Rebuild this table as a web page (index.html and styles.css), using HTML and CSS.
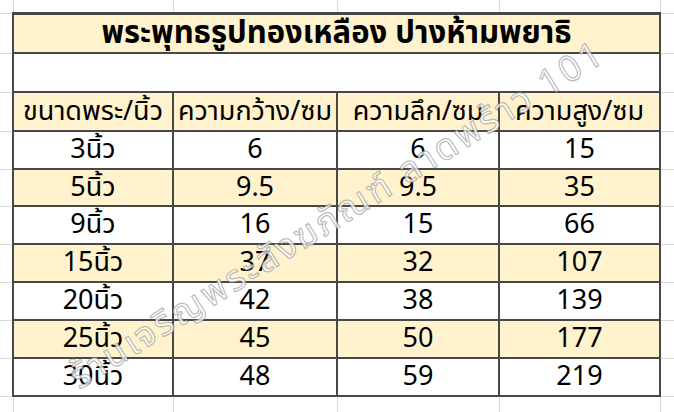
FILE: index.html
```html
<!DOCTYPE html>
<html lang="th">
<head>
<meta charset="utf-8">
<title>พระพุทธรูปทองเหลือง ปางห้ามพยาธิ</title>
<link rel="stylesheet" href="styles.css">
</head>
<body>
<div class="page">
<table class="sheet">
<colgroup><col class="c0"><col class="c1"><col class="c2"><col class="c3"><col class="c4"><col class="c5"></colgroup>
<tr class="r-top"><td></td><td></td><td></td><td></td><td></td><td></td></tr>
<tr class="r-title"><td class="m"></td><td colspan="4" class="t title"><div class="in">พระพุทธรูปทองเหลือง ปางห้ามพยาธิ</div></td><td class="m"></td></tr>
<tr class="r-blank"><td class="m"></td><td colspan="4" class="t blank"><div class="in"></div></td><td class="m"></td></tr>
<tr class="r-head"><td class="m"></td><td class="t cream"><div class="in">ขนาดพระ/นิ้ว</div></td><td class="t cream"><div class="in">ความกว้าง/ซม</div></td><td class="t cream"><div class="in">ความลึก/ซม</div></td><td class="t cream"><div class="in">ความสูง/ซม</div></td><td class="m"></td></tr>
<tr class="r-a"><td class="m"></td><td class="t"><div class="in">3นิ้ว</div></td><td class="t"><div class="in">6</div></td><td class="t"><div class="in">6</div></td><td class="t"><div class="in">15</div></td><td class="m"></td></tr>
<tr class="r-b"><td class="m"></td><td class="t cream"><div class="in">5นิ้ว</div></td><td class="t cream"><div class="in">9.5</div></td><td class="t cream"><div class="in">9.5</div></td><td class="t cream"><div class="in">35</div></td><td class="m"></td></tr>
<tr class="r-c"><td class="m"></td><td class="t"><div class="in">9นิ้ว</div></td><td class="t"><div class="in">16</div></td><td class="t"><div class="in">15</div></td><td class="t"><div class="in">66</div></td><td class="m"></td></tr>
<tr class="r-c"><td class="m"></td><td class="t cream"><div class="in">15นิ้ว</div></td><td class="t cream"><div class="in">37</div></td><td class="t cream"><div class="in">32</div></td><td class="t cream"><div class="in">107</div></td><td class="m"></td></tr>
<tr class="r-c"><td class="m"></td><td class="t"><div class="in">20นิ้ว</div></td><td class="t"><div class="in">42</div></td><td class="t"><div class="in">38</div></td><td class="t"><div class="in">139</div></td><td class="m"></td></tr>
<tr class="r-c"><td class="m"></td><td class="t cream"><div class="in">25นิ้ว</div></td><td class="t cream"><div class="in">45</div></td><td class="t cream"><div class="in">50</div></td><td class="t cream"><div class="in">177</div></td><td class="m"></td></tr>
<tr class="r-c"><td class="m"></td><td class="t"><div class="in">30นิ้ว</div></td><td class="t"><div class="in">48</div></td><td class="t"><div class="in">59</div></td><td class="t"><div class="in">219</div></td><td class="m"></td></tr>
<tr class="r-end"><td></td><td></td><td></td><td></td><td></td><td></td></tr>
</table>
<div class="watermark">ร้านเจริญพระสังฆภัณฑ์ ลาดพร้าว 101</div>
</div>
</body>
</html>
```
FILE: styles.css
```css
html, body {
  margin: 0;
  padding: 0;
  background: #ffffff;
}
.page {
  position: relative;
  width: 674px;
  height: 412px;
  overflow: hidden;
  font-family: Tahoma, "Noto Sans Thai", "Noto Sans", "DejaVu Sans", sans-serif;
  color: #000;
}
.sheet {
  border-collapse: collapse;
  table-layout: fixed;
  width: 700px;
  border: hidden;
}
.c0 { width: 13px; }
.c1 { width: 160px; }
.c2 { width: 164px; }
.c3 { width: 162px; }
.c4 { width: 161px; }
.c5 { width: 40px; }
.sheet td {
  border: 1px solid #dadada;
  padding: 0;
  text-align: center;
  vertical-align: top;
  font-size: 27px;
  line-height: 1;
  white-space: nowrap;
}
.sheet td .in {
  height: var(--h);
  line-height: var(--h);
  overflow: visible;
}
.r-top td { height: 12px; }
.r-title { --h: 37px; }
.r-blank { --h: 37px; }
.r-head { --h: 37px; }
.r-a { --h: 36px; }
.r-b { --h: 35px; }
.r-c { --h: 36px; }
.r-end td { height: 30px; }
.sheet td.t {
  border: 2px solid #484848;
}
.sheet td.title {
  background: #fff2cc;
  font-weight: bold;
  font-size: 31px;
  border-top-width: 3px;
}
.sheet td.cream { background: #fff2cc; }
.watermark {
  position: absolute;
  left: 338px;
  top: 216px;
  transform: translate(-50%, -50%) rotate(-32deg);
  font-size: 36px;
  line-height: 1.2;
  white-space: nowrap;
  color: rgba(255, 255, 255, 0.8);
  -webkit-text-stroke: 1.2px rgba(130, 130, 130, 0.55);
  letter-spacing: 3px;
}
```
